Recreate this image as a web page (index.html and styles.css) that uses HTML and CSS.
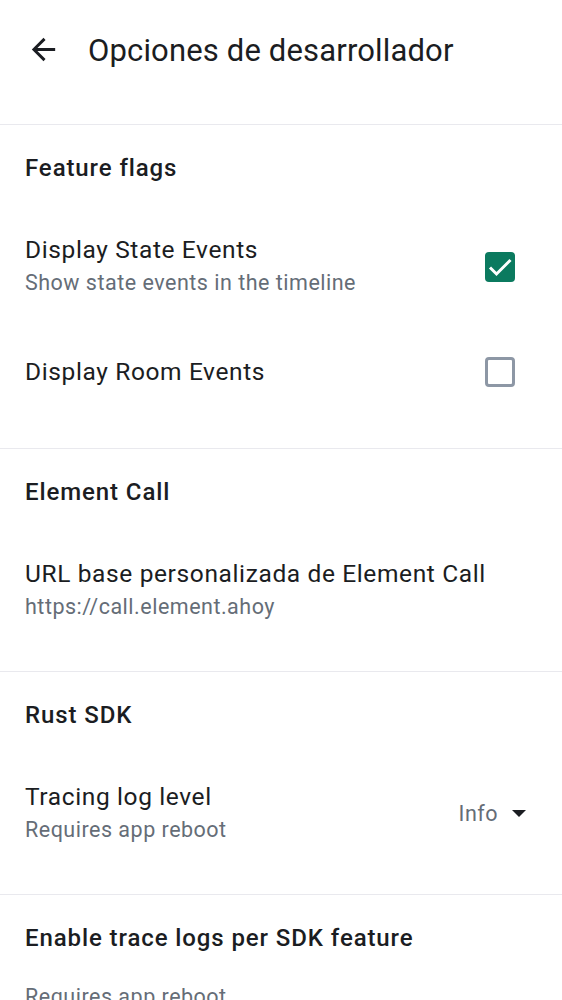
FILE: index.html
```html
<!DOCTYPE html>
<html lang="es">
<head>
<meta charset="utf-8">
<title>Opciones de desarrollador</title>
<link rel="stylesheet" href="styles.css">
</head>
<body>
<div class="screen">
  <header class="topbar">
    <button class="back" aria-label="Atrás">
      <svg viewBox="0 0 24 24" width="35" height="35"><path d="M20 11H7.83l5.59-5.59L12 4l-8 8 8 8 1.41-1.41L7.83 13H20v-2z" fill="#1b1d22"/></svg>
    </button>
    <h1 class="title">Opciones de desarrollador</h1>
  </header>

  <section class="group">
    <h2 class="group-title">Feature flags</h2>
    <div class="item two-line">
      <div class="texts">
        <div class="item-title">Display State Events</div>
        <div class="item-sub">Show state events in the timeline</div>
      </div>
      <span class="checkbox checked">
        <svg viewBox="0 0 30 30" width="30" height="30"><path d="M5 15.5l6.5 6.5L25.5 8" fill="none" stroke="#fff" stroke-width="3"/></svg>
      </span>
    </div>
    <div class="item one-line">
      <div class="texts">
        <div class="item-title">Display Room Events</div>
      </div>
      <span class="checkbox"></span>
    </div>
  </section>

  <section class="group">
    <h2 class="group-title">Element Call</h2>
    <div class="item two-line">
      <div class="texts">
        <div class="item-title">URL base personalizada de Element Call</div>
        <div class="item-sub">https://call.element.ahoy</div>
      </div>
    </div>
  </section>

  <section class="group">
    <h2 class="group-title">Rust SDK</h2>
    <div class="item two-line">
      <div class="texts">
        <div class="item-title">Tracing log level</div>
        <div class="item-sub">Requires app reboot</div>
      </div>
      <div class="dropdown">
        <span class="dropdown-value">Info</span>
        <svg viewBox="0 0 14 8" width="14" height="8"><path d="M0 0h14L7 7z" fill="#1b1d22"/></svg>
      </div>
    </div>
  </section>

  <section class="group last">
    <h2 class="group-title">Enable trace logs per SDK feature</h2>
    <div class="item-sub desc">Requires app reboot</div>
  </section>
</div>
</body>
</html>
```

FILE: styles.css
```css
* { box-sizing: border-box; }
html, body { margin: 0; padding: 0; background: #fff; }
body {
  font-family: Roboto, "Noto Sans", sans-serif;
  color: #1b1d22;
  width: 562px;
  height: 1000px;
  overflow: hidden;
}
.screen { display: flex; flex-direction: column; }

.topbar {
  height: 124px;
  display: flex;
  align-items: flex-start;
  padding-top: 32px;
}
.back {
  border: 0;
  background: none;
  padding: 0;
  margin: 0 0 0 26px;
  width: 35px;
  height: 35px;
  display: flex;
}
.title {
  margin: 1px 0 0 27px;
  font-size: 31px;
  font-weight: 400;
  line-height: 36px;
  letter-spacing: 0.15px;
  color: #1b1d22;
}

.group {
  border-top: 1px solid #e9e9ee;
  padding-bottom: 24px;
}
.group.last { padding-bottom: 0; }
.group-title {
  margin: 0;
  height: 84px;
  display: flex;
  align-items: center;
  padding: 2px 25px 0;
  font-size: 24px;
  font-weight: 500;
  letter-spacing: 0.9px;
  color: #1b1d22;
}

.item {
  display: flex;
  align-items: center;
  padding: 25px 25px 23px;
  gap: 16px;
}
.item.one-line {
  min-height: 101px;
  padding-top: 22px;
  padding-bottom: 26px;
}
.texts { flex: 1; min-width: 0; }
.item-title {
  font-size: 24.5px;
  line-height: 32px;
  letter-spacing: 0.62px;
  color: #1b1d22;
}
.item-sub {
  font-size: 21.5px;
  line-height: 34px;
  letter-spacing: 0.5px;
  color: #656d77;
}
.desc { padding: 1px 25px 0; }

.checkbox {
  width: 30px;
  height: 30px;
  border: 3px solid #8d97a5;
  border-radius: 4px;
  margin-right: 22px;
  display: flex;
  align-items: center;
  justify-content: center;
  flex: none;
}
.checkbox.checked {
  background: #0b7a5f;
  border: 0;
}

.dropdown {
  display: flex;
  align-items: center;
  gap: 14px;
  margin-right: 11px;
  flex: none;
}
.dropdown-value {
  font-size: 21.5px;
  line-height: 30px;
  letter-spacing: 0.5px;
  color: #656d77;
}
```
